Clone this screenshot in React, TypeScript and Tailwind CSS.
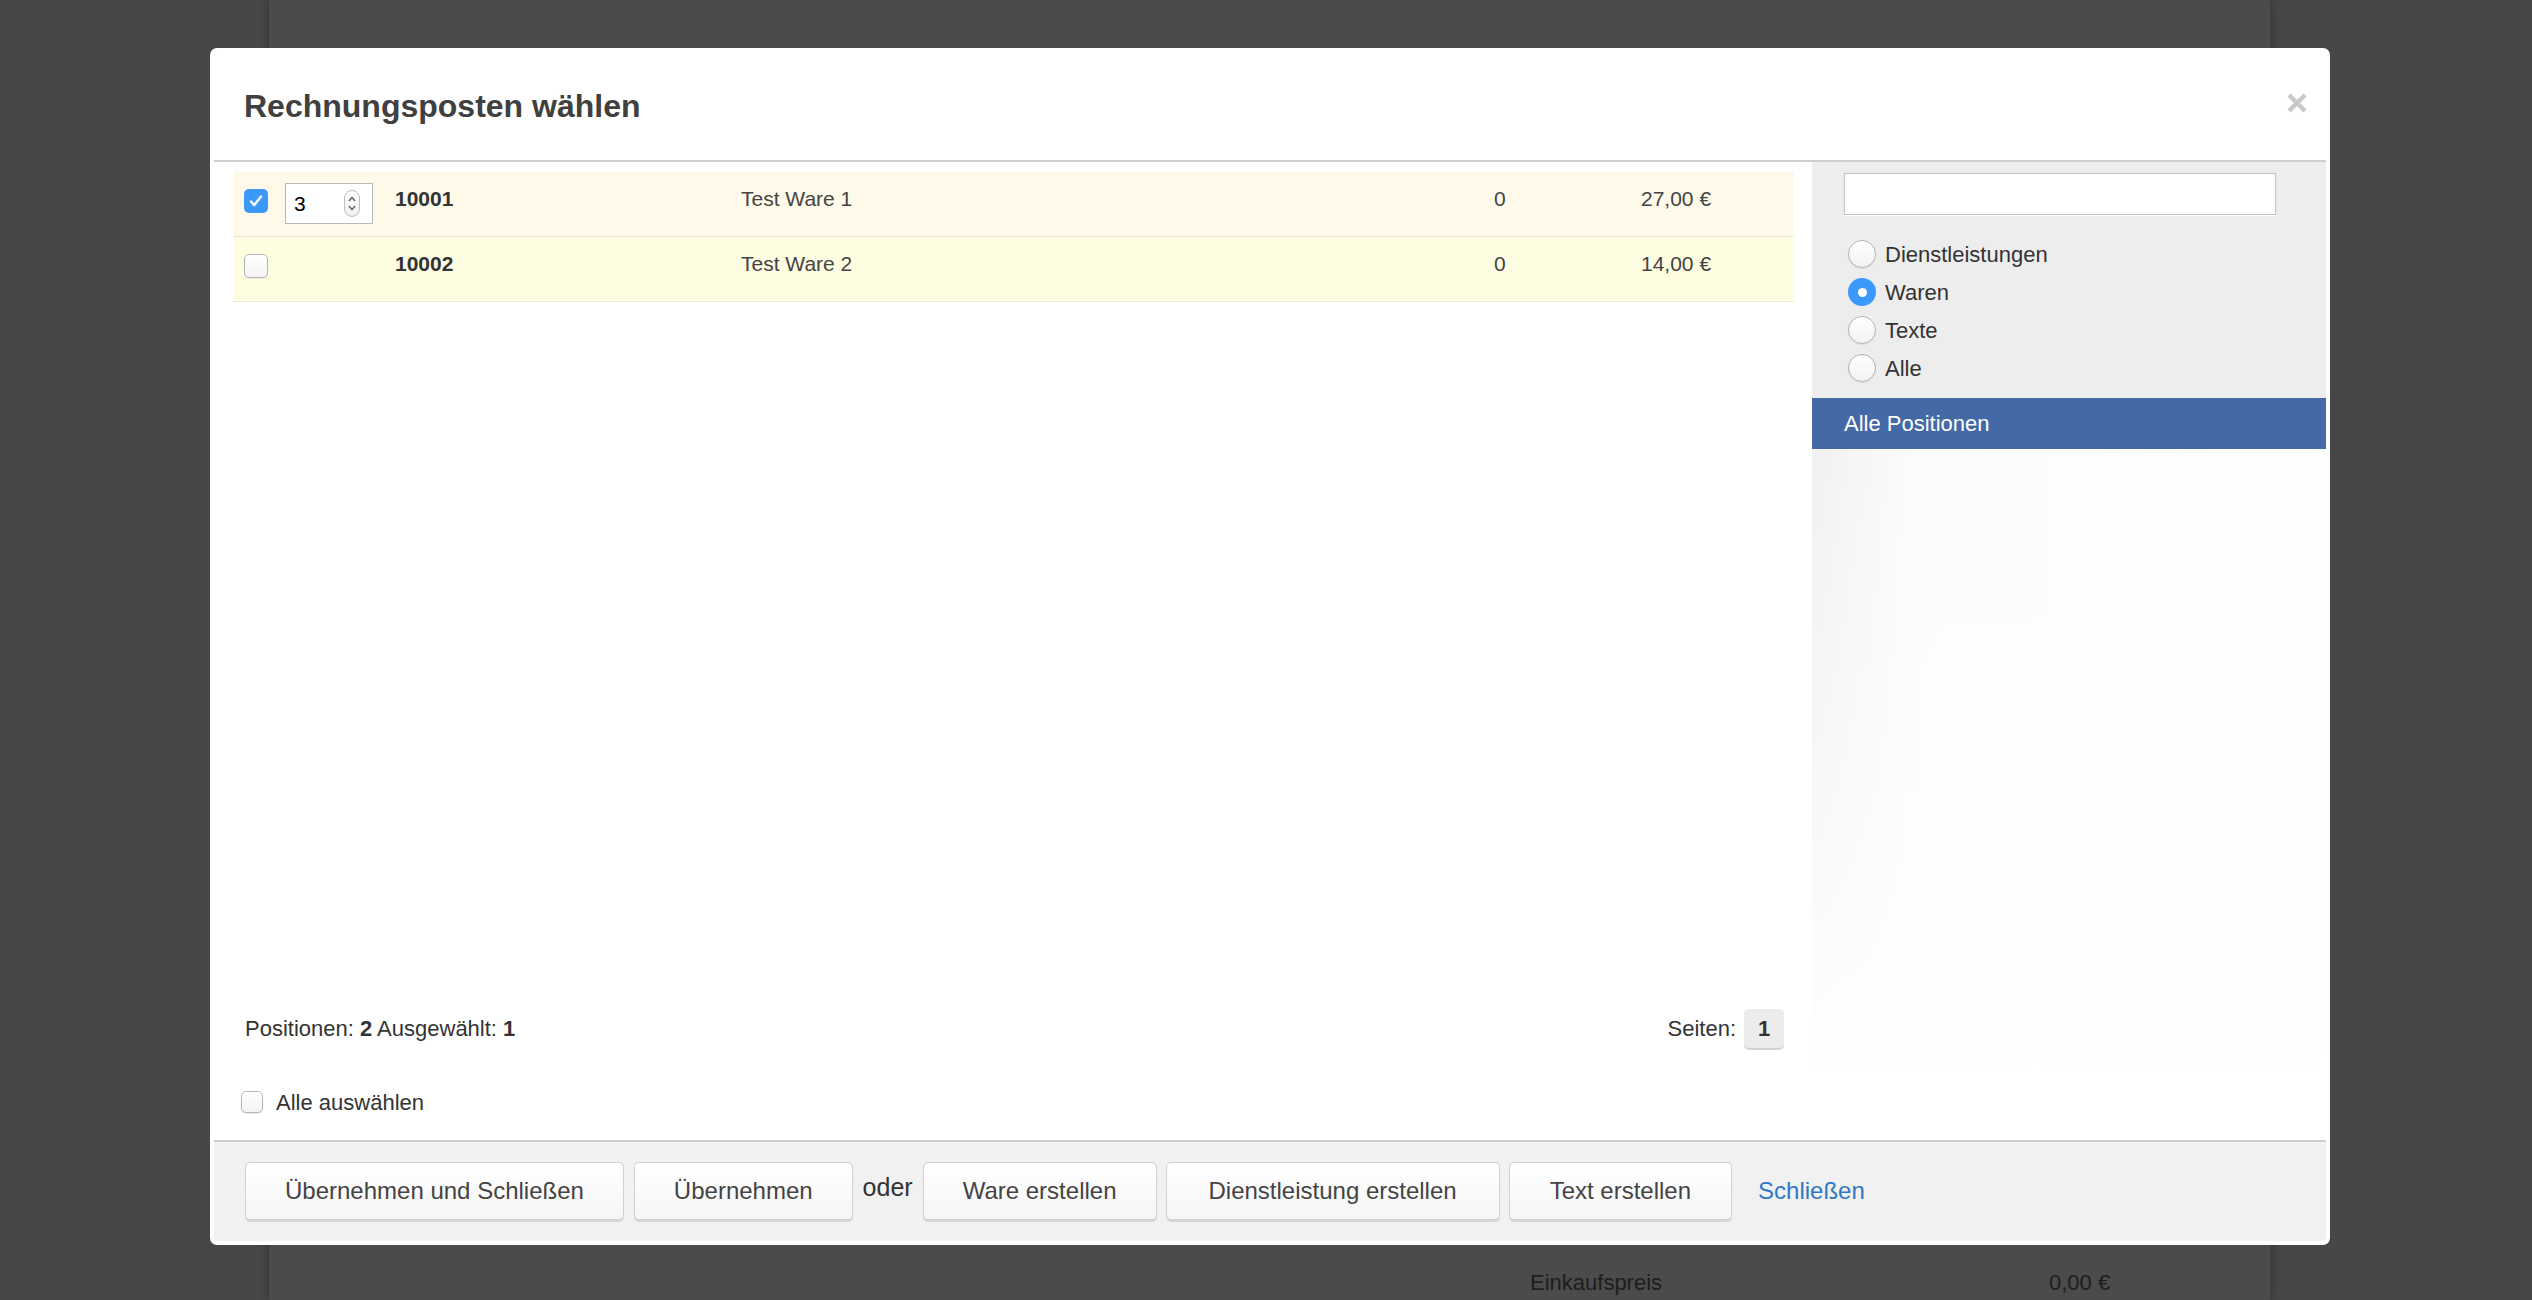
import React from "react";

function CheckBox({ checked, size = 24 }: { checked?: boolean; size?: number }) {
  if (checked) {
    return (
      <span className="flex h-[24px] w-[24px] shrink-0 items-center justify-center rounded-[5px] bg-[#3b99fc]">
        <svg width="18" height="18" viewBox="0 0 18 18">
          <path d="M4 9.5l3.3 3.6L14 4.5" fill="none" stroke="white" strokeWidth="2.4" strokeLinecap="round" strokeLinejoin="round" />
        </svg>
      </span>
    );
  }
  return (
    <span
      className={
        size === 24
          ? "block h-[24px] w-[24px] shrink-0 rounded-[5px] border border-[#b5b5b5] bg-linear-to-b from-white to-[#f4f4f4] shadow-[0_1px_1px_rgba(0,0,0,0.08)]"
          : "block h-[22px] w-[22px] shrink-0 rounded-[5px] border border-[#b5b5b5] bg-linear-to-b from-white to-[#f4f4f4] shadow-[0_1px_1px_rgba(0,0,0,0.08)]"
      }
    />
  );
}

function Radio({ checked, label }: { checked?: boolean; label: string }) {
  return (
    <div className="flex h-[38px] items-center gap-[9px]">
      {checked ? (
        <span className="flex h-[28px] w-[28px] items-center justify-center rounded-full bg-[#3b99fc]">
          <span className="block h-[9px] w-[9px] rounded-full bg-white" />
        </span>
      ) : (
        <span className="block h-[28px] w-[28px] rounded-full border border-[#b3b3b3] bg-linear-to-b from-white to-[#f3f3f3] shadow-[0_1px_1px_rgba(0,0,0,0.08)]" />
      )}
      <span className="text-[22px] text-[#333]">{label}</span>
    </div>
  );
}

function Btn({ children, pad = "n" }: { children: React.ReactNode; pad?: "n" | "w" | "m" }) {
  const px = pad === "w" ? "px-[42px]" : pad === "m" ? "px-[40px]" : "px-[39px]";
  return (
    <button
      className={`h-[58px] rounded-[5px] border border-[#d0d0d0] bg-linear-to-b from-white to-[#f6f6f6] ${px} text-[24px] text-[#444] shadow-[0_2px_0_#d6d6d6]`}
    >
      {children}
    </button>
  );
}

function Row({
  bg,
  checked,
  qty,
  id,
  name,
  amount,
  price,
}: {
  bg: string;
  checked?: boolean;
  qty?: string;
  id: string;
  name: string;
  amount: string;
  price: string;
}) {
  return (
    <div className={`flex h-[65px] items-start border-b border-dotted border-[#d6d6d6] pl-[10px] pt-[12px] ${bg}`}>
      <div className="flex w-[151px] items-start">
        <span className="mt-[5px]">
          <CheckBox checked={checked} />
        </span>
        {qty !== undefined && (
          <div className="-mt-[1px] ml-[17px] flex h-[41px] w-[88px] items-center justify-between border border-[#b9b9b9] bg-white pl-[8px] pr-[12px]">
            <span className="text-[21px] font-normal text-black">{qty}</span>
            <span className="flex h-[27px] w-[16px] flex-col items-center justify-center gap-[3px] rounded-full border border-[#bdbdbd] bg-linear-to-b from-white to-[#f0f0f0]">
              <svg width="8" height="6" viewBox="0 0 8 6">
                <path d="M1 5l3-3.5L7 5" fill="none" stroke="#555" strokeWidth="1.2" />
              </svg>
              <svg width="8" height="6" viewBox="0 0 8 6">
                <path d="M1 1l3 3.5L7 1" fill="none" stroke="#555" strokeWidth="1.2" />
              </svg>
            </span>
          </div>
        )}
      </div>
      <div className="w-[346px] text-[21px] leading-[30px] font-bold text-[#333]">{id}</div>
      <div className="w-[753px] text-[21px] leading-[30px] text-[#444]">{name}</div>
      <div className="w-[147px] text-[21px] leading-[30px] text-[#444]">{amount}</div>
      <div className="text-[21px] leading-[30px] text-[#444]">{price}</div>
    </div>
  );
}

export default function App() {
  return (
    <div className="relative h-[1300px] w-[2532px] overflow-hidden bg-[#474747] font-['Liberation_Sans',Arial,sans-serif]">
      {/* page behind the overlay */}
      <div className="ml-[269px] flex h-full w-[2001px] flex-col justify-end bg-[#4b4b4b] pb-[3px] shadow-[0_0_10px_rgba(0,0,0,0.35)]">
        <div className="flex h-[30px] items-center pl-[1261px] text-[22px] text-[#1d1d1d]">
          <span className="w-[519px]">Einkaufspreis</span>
          <span>0,00 €</span>
        </div>
      </div>

      {/* modal */}
      <div className="absolute left-[210px] top-[48px] flex h-[1197px] w-[2120px] flex-col rounded-[7px] bg-white p-[4px]">
        {/* header */}
        <div className="flex h-[110px] shrink-0 items-center justify-between border-b-2 border-[#cecece] pl-[30px] pr-[19px]">
          <h1 className="text-[32px] font-bold text-[#404040]">Rechnungsposten wählen</h1>
          <svg className="-mt-[6px]" width="20" height="20" viewBox="0 0 20 20">
            <path d="M2 2L18 18M18 2L2 18" stroke="#c8c8c8" strokeWidth="4.5" strokeLinecap="butt" />
          </svg>
        </div>

        {/* body */}
        <div className="flex min-h-0 flex-1">
          <div className="flex flex-1 flex-col pl-[20px] pr-[18px] pt-[10px]">
            <Row bg="bg-[#fef9e9]" checked qty="3" id="10001" name="Test Ware 1" amount="0" price="27,00 €" />
            <Row bg="bg-[#fefde1]" id="10002" name="Test Ware 2" amount="0" price="14,00 €" />
            <div className="flex-1" />
            <div className="flex h-[40px] items-center justify-between pl-[11px] pr-[10px] text-[22px] text-[#333]">
              <span>
                Positionen: <b>2</b> Ausgewählt: <b>1</b>
              </span>
              <div className="flex items-center gap-[8px]">
                <span>Seiten:</span>
                <span className="flex h-[39px] w-[40px] items-center justify-center rounded-[5px] bg-[#ececec] font-bold text-[#333] shadow-[0_2px_0_#d2d2d2]">
                  1
                </span>
              </div>
            </div>
            <div className="mb-[26px] mt-[42px] flex h-[24px] items-center gap-[13px] pl-[7px]">
              <CheckBox size={22} />
              <span className="text-[22px] text-[#333]">Alle auswählen</span>
            </div>
          </div>

          {/* sidebar */}
          <div className="flex w-[514px] shrink-0 flex-col">
            <div className="bg-[#ededed] pt-[11px]">
              <div className="ml-[32px] h-[42px] w-[432px] border border-[#c4c4c4] bg-white shadow-[0_1px_0_#ffffff]" />
              <div className="mb-[11px] mt-[20px] flex flex-col pl-[36px]">
                <Radio label="Dienstleistungen" />
                <Radio checked label="Waren" />
                <Radio label="Texte" />
                <Radio label="Alle" />
              </div>
            </div>
            <div className="flex h-[51px] items-center bg-[#4469a7] pl-[32px] text-[22px] text-white">Alle Positionen</div>
            <div className="relative flex-1 bg-linear-to-r from-[#f1f1f1] via-[#fcfcfc] via-20% to-white">
              <div className="absolute inset-0 bg-linear-to-b from-transparent via-white/60 via-60% to-white to-90%" />
            </div>
          </div>
        </div>

        {/* footer */}
        <div className="flex h-[101px] shrink-0 items-start gap-[9px] rounded-b-[4px] border-t-2 border-[#cecece] bg-[#f1f1f1] pl-[31px] pt-[20px]">
          <Btn>Übernehmen und Schließen</Btn>
          <span className="ml-[1px]">
            <Btn>Übernehmen</Btn>
          </span>
          <span className="ml-[1px] flex h-[58px] items-center pb-[6px] text-[25px] text-[#333]">oder</span>
          <span className="ml-[1px]">
            <Btn>Ware erstellen</Btn>
          </span>
          <Btn pad="w">Dienstleistung erstellen</Btn>
          <Btn pad="m">Text erstellen</Btn>
          <span className="ml-[17px] flex h-[58px] items-center text-[24px] text-[#2f78c4]">Schließen</span>
        </div>
      </div>
    </div>
  );
}
